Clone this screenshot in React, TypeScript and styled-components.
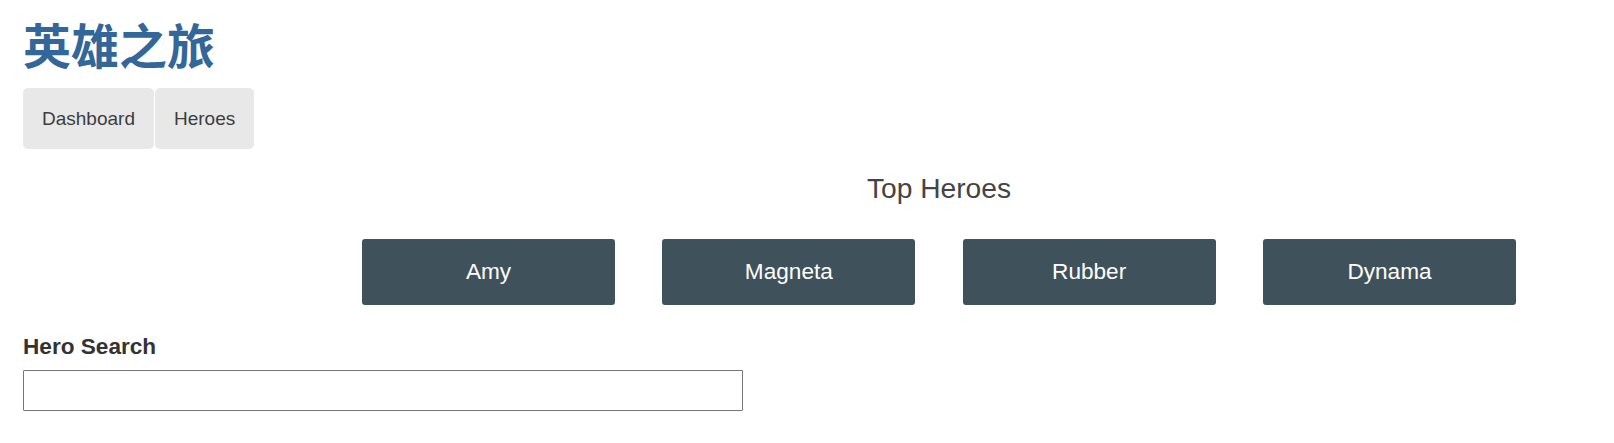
import styled, { createGlobalStyle } from 'styled-components';

const heroes = ['Amy', 'Magneta', 'Rubber', 'Dynama'];

function App() {
	return (
		<>
			<GlobalStyle />
			<Page>
				<Title>英雄之旅</Title>
				<Nav>
					<NavLink href='#'>Dashboard</NavLink>
					<NavLink href='#'>Heroes</NavLink>
				</Nav>

				<Dashboard>
					<SectionTitle>Top Heroes</SectionTitle>
					<HeroesMenu>
						{heroes.map((name) => (
							<HeroCard key={name} href='#'>
								{name}
							</HeroCard>
						))}
					</HeroesMenu>
				</Dashboard>

				<Search>
					<SearchLabel htmlFor='search-box'>Hero Search</SearchLabel>
					<SearchBox id='search-box' type='text' />
				</Search>
			</Page>
		</>
	);
}

export default App;

const GlobalStyle = createGlobalStyle`
	html, body {
		margin: 0;
		background: #fff;
	}
	body {
		color: #333;
		font-family: 'Liberation Sans', Arial, sans-serif;
	}
`;

const Page = styled.div`
	padding: 0 23px;
	display: flex;
	flex-direction: column;
	align-items: flex-start;
`;

const Title = styled.h1`
	margin: 8px 0 0;
	color: #369;
	font-family: 'Liberation Sans', 'Noto Sans CJK SC', sans-serif;
	font-size: 48px;
	font-weight: 700;
`;

const Nav = styled.nav`
	display: flex;
	gap: 1px;
	margin-top: 10px;
`;

const NavLink = styled.a`
	display: block;
	padding: 19px 19px;
	line-height: 23px;
	font-size: 19px;
	background-color: #e8e8e8;
	color: #3d3d3d;
	border-radius: 5px;
	text-decoration: none;
`;

const Dashboard = styled.section`
	margin-left: 339px;
	width: 1154px;
	display: flex;
	flex-direction: column;
`;

const SectionTitle = styled.h2`
	margin: 23px 0 0;
	text-align: center;
	color: #444;
	font-size: 28.2px;
	font-weight: 300;
	line-height: 32px;
`;

const HeroesMenu = styled.div`
	margin-top: 35px;
	display: flex;
	justify-content: space-between;
`;

const HeroCard = styled.a`
	width: 253px;
	box-sizing: border-box;
	padding: 20px 16px;
	line-height: 26px;
	font-size: 22.6px;
	text-align: center;
	color: #fff;
	background-color: #3f525c;
	border-radius: 3px;
	text-decoration: none;
`;

const Search = styled.div`
	display: flex;
	flex-direction: column;
	margin-top: 29px;
`;

const SearchLabel = styled.label`
	font-size: 22.6px;
	font-weight: 700;
	line-height: 26px;
	color: #333;
`;

const SearchBox = styled.input`
	margin-top: 10px;
	width: 720px;
	height: 41px;
	box-sizing: border-box;
	border: 1px solid #767676;
	border-radius: 1px;
	padding: 0 4px;
	font-size: 19px;
	font-family: 'Liberation Serif', serif;
	color: #333;
	outline: none;
`;
